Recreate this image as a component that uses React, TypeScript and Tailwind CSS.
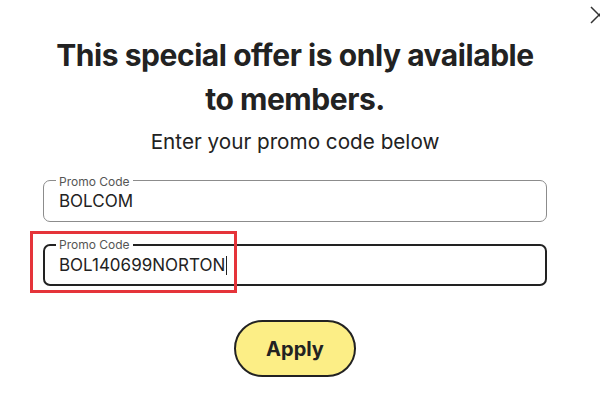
import { useState } from "react";

type FieldProps = {
  value: string;
  focused?: boolean;
};

const PromoField = ({ value, focused }: FieldProps) => {
  return (
    <div
      className={
        focused
          ? "relative flex h-[42px] items-center rounded-[7px] border-2 border-[#222] pl-[14px]"
          : "relative flex h-[42px] items-center rounded-[7px] border border-[#8c8c8c] pl-[15px]"
      }
    >
      <span
        className={
          focused
            ? "absolute -top-[8px] left-[11px] bg-white px-[3px] text-[12px] leading-[13px] text-[#555]"
            : "absolute -top-[6px] left-[12px] bg-white px-[3px] text-[12px] leading-[13px] text-[#555]"
        }
      >
        Promo Code
      </span>
      <span className="text-[17px] leading-[20px] text-[#222]">{value}</span>
      {focused && <span className="ml-[1px] h-[19px] border-l border-[#222]" />}
    </div>
  );
};

export default function App() {
  const [codes] = useState(["BOLCOM", "BOL140699NORTON"]);

  return (
    <div className="relative h-[400px] w-[600px] overflow-hidden bg-white font-['Inter','Liberation_Sans',sans-serif] text-[#222]">
      {/* close button, mostly cut off by the right edge */}
      <button className="absolute left-[590px] top-[6px] text-[#333]">
        <svg width="18" height="18" viewBox="0 0 18 18" fill="none" stroke="currentColor" strokeWidth="1.5">
          <path d="M1 1l16 16M17 1L1 17" />
        </svg>
      </button>

      <div className="flex w-[590px] flex-col items-center pt-[33px]">
        <h2 className="text-center text-[30px] font-bold leading-[44px] tracking-[-0.015em]">
          This special offer is only available
          <br />
          to members.
        </h2>
        <p className="mt-[7px] text-[20.7px] leading-[28px]">Enter your promo code below</p>

        <div className="mt-[24px] flex w-[504px] flex-col gap-[22px]">
          <PromoField value={codes[0]} />
          <PromoField value={codes[1]} focused />
        </div>

        <button className="mt-[34px] h-[57px] w-[122px] rounded-full border-2 border-[#222] bg-[#fcee86] text-[20px] font-bold">
          Apply
        </button>
      </div>

      {/* highlight box around the second code */}
      <div className="absolute left-[30px] top-[231px] h-[62px] w-[207px] border-[3px] border-[#e5343a]" />
    </div>
  );
}
